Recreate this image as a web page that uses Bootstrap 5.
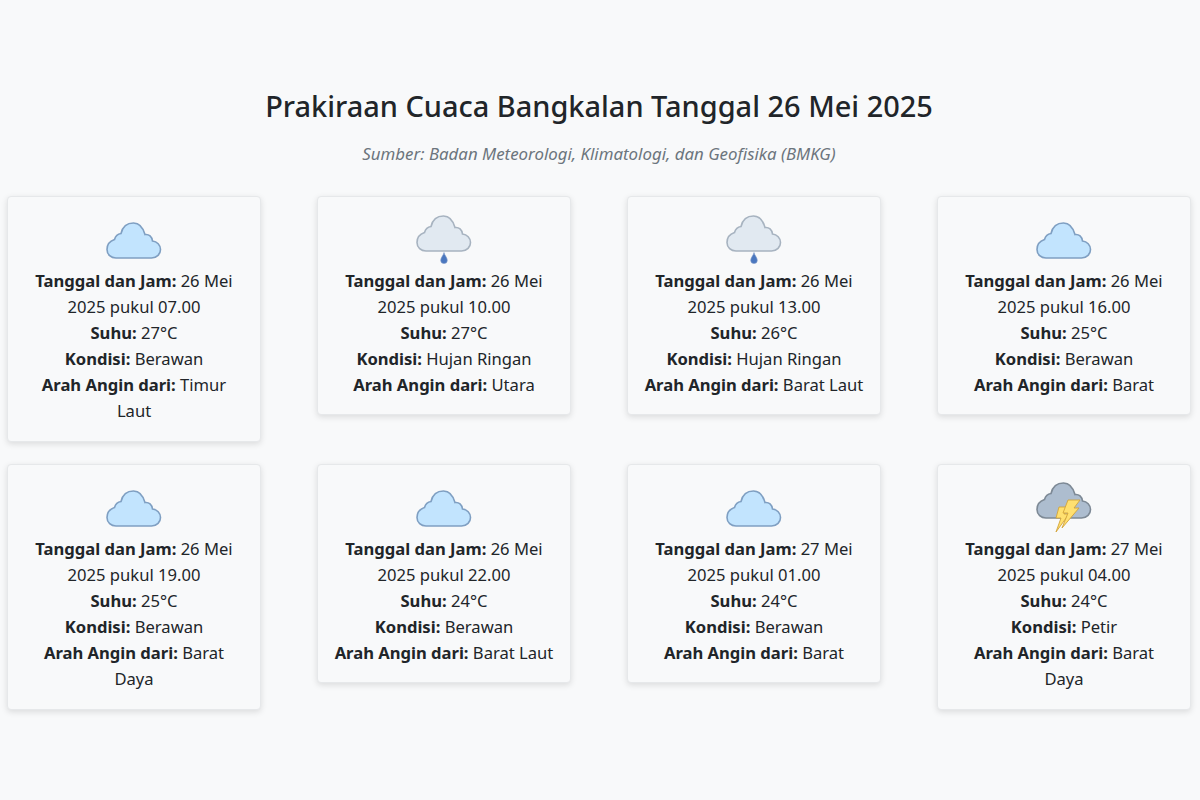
<!DOCTYPE html>
<html lang="id"><head><meta charset="utf-8"><title>Prakiraan Cuaca</title>
<link href="https://cdn.jsdelivr.net/npm/bootstrap@5.3.0/dist/css/bootstrap.min.css" rel="stylesheet">
<style>
body{background:#f8f9fa;color:#212529;font-family:"Noto Sans","Open Sans",sans-serif;font-size:16.6px}
.page{padding:87px 9px 40px 7px}
h1.title{font-size:28.95px;font-weight:500;line-height:38px;margin:0 0 17px;text-align:center}
.src{font-size:16.85px;line-height:24px;color:#6c757d;font-style:italic;text-align:center;margin:0 0 30px}
.wx{--bs-gutter-x:56px;--bs-gutter-y:22.4px}
.wx .card{background:#f8f9fa;border:1px solid #e6e8ea;border-radius:4px;box-shadow:0 2px 6px rgba(0,0,0,.12);padding:15px 10px 16px;text-align:center}
.wx svg{display:block;margin:0 auto;width:64px;height:56px}
.wx .line{line-height:26.1px}
.wx b{font-weight:700}
.c-berawan{fill:#c2e4fe;stroke:#7f9fc2;stroke-width:1.6}
.c-hujan{fill:#e1e9f1;stroke:#a7b3c0;stroke-width:1.6}
.c-petir{fill:#adbdcf;stroke:#7d8995;stroke-width:1.6}
.drop{fill:#4a77bf;stroke:#7f9bc9;stroke-width:.6}
.bolt{fill:#ffe070;stroke:#d3a43a;stroke-width:.9}
</style></head><body>
<svg width="0" height="0" class="position-absolute"><defs>
<path id="cl" d="M14 46H49.5C55 46 58.5 42 58.5 37.5C58.5 33 55 29.5 50.5 29C50 24.5 47 22 43 22.5C41 15.5 37 11 31.5 11C25 11 20.5 15 19 21.5C16 22 13.5 24 12.5 27.5C8 29 5 33 5 37.5C5 42.5 9 46 14 46Z"/>
</defs></svg>
<div class="page">
<h1 class="title">Prakiraan Cuaca Bangkalan Tanggal 26 Mei 2025</h1>
<p class="src">Sumber: Badan Meteorologi, Klimatologi, dan Geofisika (BMKG)</p>
<div class="row wx align-items-start">
<div class="col-3"><div class="card"><svg viewBox="0 0 64 56"><use href="#cl" class="c-berawan"/></svg><div class="line"><b>Tanggal dan Jam:</b> 26 Mei<br>2025 pukul 07.00</div><div class="line"><b>Suhu:</b> 27°C</div><div class="line"><b>Kondisi:</b> Berawan</div><div class="line"><b>Arah Angin dari:</b> Timur<br>Laut</div></div></div>
<div class="col-3"><div class="card"><svg viewBox="0 0 64 56"><use href="#cl" y="-7" class="c-hujan"/><path class="drop" d="M32 40.5C32.3 43 35.3 45.5 35.3 48.3A3.3 3.3 0 0 1 28.7 48.3C28.7 45.5 31.7 43 32 40.5Z"/></svg><div class="line"><b>Tanggal dan Jam:</b> 26 Mei<br>2025 pukul 10.00</div><div class="line"><b>Suhu:</b> 27°C</div><div class="line"><b>Kondisi:</b> Hujan Ringan</div><div class="line"><b>Arah Angin dari:</b> Utara</div></div></div>
<div class="col-3"><div class="card"><svg viewBox="0 0 64 56"><use href="#cl" y="-7" class="c-hujan"/><path class="drop" d="M32 40.5C32.3 43 35.3 45.5 35.3 48.3A3.3 3.3 0 0 1 28.7 48.3C28.7 45.5 31.7 43 32 40.5Z"/></svg><div class="line"><b>Tanggal dan Jam:</b> 26 Mei<br>2025 pukul 13.00</div><div class="line"><b>Suhu:</b> 26°C</div><div class="line"><b>Kondisi:</b> Hujan Ringan</div><div class="line"><b>Arah Angin dari:</b> Barat Laut</div></div></div>
<div class="col-3"><div class="card"><svg viewBox="0 0 64 56"><use href="#cl" class="c-berawan"/></svg><div class="line"><b>Tanggal dan Jam:</b> 26 Mei<br>2025 pukul 16.00</div><div class="line"><b>Suhu:</b> 25°C</div><div class="line"><b>Kondisi:</b> Berawan</div><div class="line"><b>Arah Angin dari:</b> Barat</div></div></div>
<div class="col-3"><div class="card"><svg viewBox="0 0 64 56"><use href="#cl" class="c-berawan"/></svg><div class="line"><b>Tanggal dan Jam:</b> 26 Mei<br>2025 pukul 19.00</div><div class="line"><b>Suhu:</b> 25°C</div><div class="line"><b>Kondisi:</b> Berawan</div><div class="line"><b>Arah Angin dari:</b> Barat<br>Daya</div></div></div>
<div class="col-3"><div class="card"><svg viewBox="0 0 64 56"><use href="#cl" class="c-berawan"/></svg><div class="line"><b>Tanggal dan Jam:</b> 26 Mei<br>2025 pukul 22.00</div><div class="line"><b>Suhu:</b> 24°C</div><div class="line"><b>Kondisi:</b> Berawan</div><div class="line"><b>Arah Angin dari:</b> Barat Laut</div></div></div>
<div class="col-3"><div class="card"><svg viewBox="0 0 64 56"><use href="#cl" class="c-berawan"/></svg><div class="line"><b>Tanggal dan Jam:</b> 27 Mei<br>2025 pukul 01.00</div><div class="line"><b>Suhu:</b> 24°C</div><div class="line"><b>Kondisi:</b> Berawan</div><div class="line"><b>Arah Angin dari:</b> Barat</div></div></div>
<div class="col-3"><div class="card"><svg viewBox="0 0 64 56"><use href="#cl" y="-8" class="c-petir"/><path class="bolt" d="M27 27H36L32 34H37L24 52L29 38H24Z"/><path class="bolt" d="M36 20H48L42 28H47L30 48L36 33H31Z"/></svg><div class="line"><b>Tanggal dan Jam:</b> 27 Mei<br>2025 pukul 04.00</div><div class="line"><b>Suhu:</b> 24°C</div><div class="line"><b>Kondisi:</b> Petir</div><div class="line"><b>Arah Angin dari:</b> Barat<br>Daya</div></div></div>
</div></div>
<script src="https://cdn.jsdelivr.net/npm/bootstrap@5.3.0/dist/js/bootstrap.bundle.min.js"></script>
</body></html>
